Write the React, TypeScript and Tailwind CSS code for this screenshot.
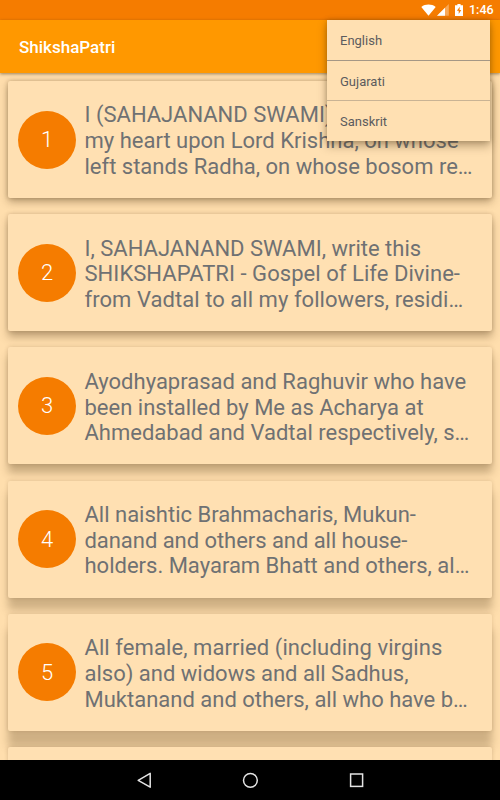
import { clsx } from "clsx";

const languages = ["English", "Gujarati", "Sanskrit"];

const verses = [
  {
    lines: ["I (SAHAJANAND SWAMI),", "my heart upon Lord Krishna, on whose", "left stands Radha, on whose bosom re…"],
    shadow: "shadow-[0_4px_8px_rgba(70,45,15,0.36),0_0_4px_rgba(70,45,15,0.28)]",
  },
  {
    lines: ["I, SAHAJANAND SWAMI, write this", "SHIKSHAPATRI - Gospel of Life Divine-", "from Vadtal to all my followers, residi…"],
    tracking: ["", "tracking-[0.05px]", "tracking-[0.05px]"],
    shadow: "shadow-[0_6px_8px_rgba(70,45,15,0.34),0_0_4px_rgba(70,45,15,0.22)]",
  },
  {
    lines: ["Ayodhyaprasad and Raghuvir who have", "been installed by Me as Acharya at", "Ahmedabad and Vadtal respectively, s…"],
    shadow: "shadow-[0_9px_8px_rgba(70,45,15,0.29),0_0_4px_rgba(70,45,15,0.2)]",
  },
  {
    lines: ["All naishtic Brahmacharis, Mukun-", "danand and others and all house-", "holders. Mayaram Bhatt and others, al…"],
    tracking: ["", "tracking-[-0.05px]", ""],
    shadow: "shadow-[0_12px_8px_rgba(70,45,15,0.26),0_0_4px_rgba(70,45,15,0.18)]",
  },
  {
    lines: ["All female, married (including virgins", "also) and widows and all Sadhus,", "Muktanand and others, all who have b…"],
    tracking: ["tracking-[0.08px]", "", ""],
    shadow: "shadow-[0_16px_8px_rgba(70,45,15,0.26),0_0_4px_rgba(70,45,15,0.15)]",
  },
];

function StatusBar() {
  return (
    <div className="h-5 shrink-0 bg-[#f57c00] flex items-center justify-end pr-[7px] text-white">
      <svg className="w-[15px] h-[12px]" viewBox="0 0 15 12" fill="currentColor">
        <path d="M0.3 2.9C4.4-.3 10.6-.3 14.7 2.9L7.5 11.8z" />
      </svg>
      <svg className="w-[12px] h-[12px] ml-[1px]" viewBox="0 0 12 12" fill="currentColor">
        <path d="M0 11.8L11.8 0v11.8z" opacity="0.35" />
        <path d="M0 11.8L8 3.8v8z" />
      </svg>
      <svg className="w-[8px] h-[12px] ml-[6px] -mt-px" viewBox="0 0 8 12">
        <path d="M2.4 0h3.2v1.2H8V12H0V1.2h2.4z" fill="#fff" />
        <path d="M4.8 2.7L1.9 6.8h1.8v3.2L6.3 6H4.5z" fill="#f57c00" />
      </svg>
      <span className="ml-[6px] w-[24px] text-[12.5px] leading-5 font-medium whitespace-nowrap">1:46</span>
    </div>
  );
}

function LanguageMenu() {
  return (
    <div className="absolute z-20 top-5 left-[327px] w-[163px] bg-[#ffe0b2] shadow-[0_5px_9px_rgba(60,40,10,0.35),0_0_5px_rgba(60,40,10,0.25)]">
      {languages.map((language, i) => (
        <div
          key={language}
          className={clsx(
            "pl-[13px] pt-[2px] flex items-center text-[13px] text-[#5c5c5e]",
            i === 0 && "h-[41px] border-b border-[#a59785]",
            i === 1 && "h-10 border-b border-[#c9b394]",
            i === 2 && "h-10"
          )}
        >
          {language}
        </div>
      ))}
    </div>
  );
}

function NavBar() {
  return (
    <div className="relative z-30 h-10 shrink-0 bg-black text-[#e4e4e4]">
      <svg className="w-full h-full" viewBox="0 0 500 40" fill="none" stroke="currentColor" strokeWidth="1.5">
        <path d="M150.2 13.4v13.8L138.2 20.3z" strokeLinejoin="round" />
        <circle cx="250.4" cy="20.3" r="6.9" />
        <rect x="350.6" y="14" width="12" height="12.4" />
      </svg>
    </div>
  );
}

export default function App() {
  return (
    <div className="relative w-[500px] h-[800px] overflow-hidden flex flex-col bg-[#ffdead] font-['Roboto','Liberation_Sans',sans-serif]">
      <StatusBar />
      <header className="relative z-10 h-[53px] shrink-0 bg-[#ff9800] pl-[19px] pt-[2px] flex items-center shadow-[0_1px_3px_rgba(60,40,10,0.5)]">
        <h1 className="text-[17px] font-medium text-white">ShikshaPatri</h1>
      </header>
      <LanguageMenu />

      <main className="flex-1 min-h-0 overflow-hidden px-2 pt-2 flex flex-col gap-[16.2px]">
        {verses.map((verse, i) => (
          <article
            key={i}
            className={clsx("relative h-[117px] shrink-0 rounded-[2px] bg-[#ffe0b2] pl-[10px] flex items-center", verse.shadow)}
          >
            <div className="w-[58px] h-[58px] shrink-0 rounded-full bg-[#f57c00] text-white text-[22px] font-light flex items-center justify-center">
              {i + 1}
            </div>
            <div className="ml-[8.5px] pt-[3px] text-[22px] leading-[25.7px] text-[#6f7173] whitespace-nowrap">
              {verse.lines.map((line, n) => (
                <p key={line} className={verse.tracking?.[n]}>{line}</p>
              ))}
            </div>
          </article>
        ))}
        {/* top edge of the next card */}
        <div className="relative h-[117px] shrink-0 rounded-[2px] bg-[#ffe0b2] shadow-[0_0_4px_rgba(70,45,15,0.2)]" />
      </main>
      <NavBar />
    </div>
  );
}
